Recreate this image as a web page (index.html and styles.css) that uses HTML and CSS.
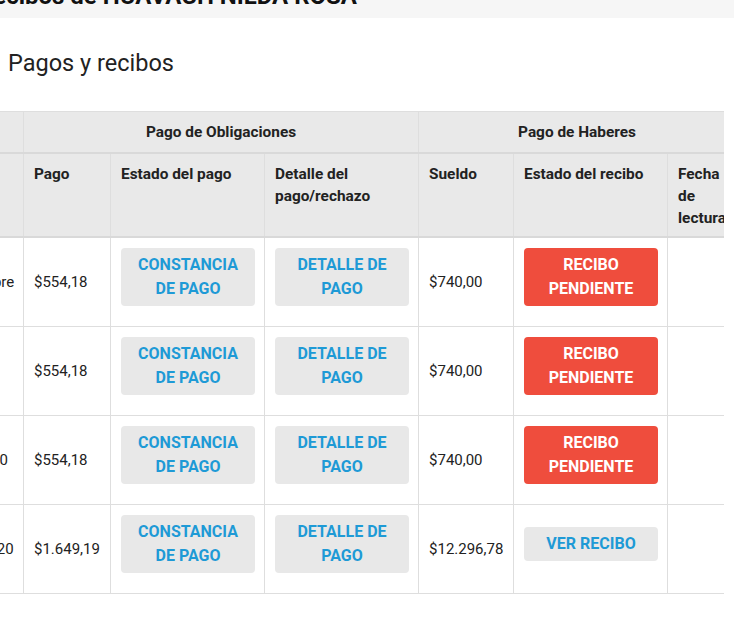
FILE: index.html
```html
<!DOCTYPE html>
<html lang="es">
<head>
<meta charset="utf-8">
<title>Pagos y recibos</title>
<link rel="stylesheet" href="styles.css">
</head>
<body>
<header class="topbar">
  <div class="topbar-inner"><h1 class="topbar-title">Recibos de HUAVACH NILDA ROSA</h1></div>
</header>
<main class="content">
  <h2 class="section-title">Pagos y recibos</h2>
  <div class="table-scroll">
    <table class="grid">
      <colgroup>
        <col class="c-periodo">
        <col class="c-pago">
        <col class="c-btn">
        <col class="c-btn">
        <col class="c-sueldo">
        <col class="c-btn">
        <col class="c-fecha">
      </colgroup>
      <thead>
        <tr class="group-row">
          <th></th>
          <th colspan="3" class="center">Pago de Obligaciones</th>
          <th colspan="3" class="center">Pago de Haberes</th>
        </tr>
        <tr class="label-row">
          <th></th>
          <th>Pago</th>
          <th>Estado del pago</th>
          <th>Detalle del pago/rechazo</th>
          <th>Sueldo</th>
          <th>Estado del recibo</th>
          <th>Fecha de lectura</th>
        </tr>
      </thead>
      <tbody>
        <tr>
          <td>Septiembre</td>
          <td>$554,18</td>
          <td class="btn-cell"><a class="btn btn-light">Constancia de pago</a></td>
          <td class="btn-cell"><a class="btn btn-light">Detalle de pago</a></td>
          <td>$740,00</td>
          <td class="btn-cell"><a class="btn btn-red">Recibo pendiente</a></td>
          <td></td>
        </tr>
        <tr>
          <td>Agosto</td>
          <td>$554,18</td>
          <td class="btn-cell"><a class="btn btn-light">Constancia de pago</a></td>
          <td class="btn-cell"><a class="btn btn-light">Detalle de pago</a></td>
          <td>$740,00</td>
          <td class="btn-cell"><a class="btn btn-red">Recibo pendiente</a></td>
          <td></td>
        </tr>
        <tr>
          <td>Julio 2020</td>
          <td>$554,18</td>
          <td class="btn-cell"><a class="btn btn-light">Constancia de pago</a></td>
          <td class="btn-cell"><a class="btn btn-light">Detalle de pago</a></td>
          <td>$740,00</td>
          <td class="btn-cell"><a class="btn btn-red">Recibo pendiente</a></td>
          <td></td>
        </tr>
        <tr class="last-row">
          <td>Enero 2020</td>
          <td>$1.649,19</td>
          <td class="btn-cell"><a class="btn btn-light">Constancia de pago</a></td>
          <td class="btn-cell"><a class="btn btn-light">Detalle de pago</a></td>
          <td>$12.296,78</td>
          <td class="btn-cell"><a class="btn btn-light">Ver recibo</a></td>
          <td></td>
        </tr>
      </tbody>
    </table>
  </div>
</main>
</body>
</html>
```

FILE: styles.css
```css
* { box-sizing: border-box; }

body {
  margin: 0;
  background: #ffffff;
  font-family: Roboto, "Liberation Sans", Arial, sans-serif;
  color: #222222;
}

.topbar {
  height: 18px;
  background: #f6f6f6;
  overflow: hidden;
}

.topbar-inner {
  width: 357px;
  display: flex;
  justify-content: flex-end;
  white-space: nowrap;
}

.topbar-title {
  margin: -17px 0 0 0;
  font-size: 24px;
  line-height: 26px;
  font-weight: 700;
  color: #111111;
  flex: none;
}

.section-title {
  margin: 31px 0 0 8px;
  font-size: 23.5px;
  line-height: 28px;
  font-weight: 400;
  color: #222222;
}

.table-scroll {
  margin-top: 34px;
  width: 724px;
  overflow: hidden;
}

.grid {
  margin-left: -73px;
  width: 808px;
  table-layout: fixed;
  border-collapse: collapse;
}

.c-periodo { width: 96px; }
.c-pago { width: 87px; }
.c-btn { width: 154px; }
.c-sueldo { width: 95px; }
.c-fecha { width: 68px; }

.grid th,
.grid td {
  border: 1px solid #dedede;
  text-align: left;
}

.grid th {
  background: #e9e9e9;
  font-size: 15.4px;
  line-height: 22px;
  font-weight: 700;
  color: #222222;
  padding: 9px 10px 9px 10px;
  vertical-align: top;
}

.grid th.center { text-align: center; }

.group-row th {
  border-bottom: 2px solid #d9d9d9;
}

.label-row th {
  border-bottom: 2px solid #d9d9d9;
  padding: 9px 10px 7px 10px;
  height: 80px;
}

.grid td {
  font-size: 15px;
  line-height: 22px;
  padding: 10px 10px 10px 10px;
  vertical-align: middle;
  height: 87px;
  white-space: nowrap;
}

.grid .last-row td {
  height: 86px;
}

.grid td.btn-cell {
  padding: 10px 9px 20px 10px;
}

.btn {
  display: block;
  width: 100%;
  border-radius: 4px;
  padding: 5px 10px;
  text-align: center;
  text-transform: uppercase;
  font-size: 16px;
  line-height: 24px;
  font-weight: 700;
  white-space: normal;
  text-decoration: none;
}

.btn-light {
  background: #e8e8e8;
  color: #1e9ad6;
}

.btn-red {
  background: #ef4d3d;
  color: #ffffff;
}
```
